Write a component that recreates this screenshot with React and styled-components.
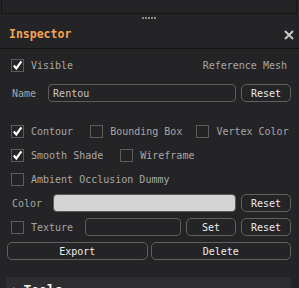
import React from 'react';
import styled, { createGlobalStyle } from 'styled-components';

const Global = createGlobalStyle`
	html, body{
		margin: 0;
		background: #242426;
		overflow: hidden;
	}
	body{
		font-family: 'DejaVu Sans Mono', 'Liberation Mono', monospace;
		font-size: 10px;
		color: #a6a6a6;
	}
`;

const Panel = styled.div`
	width: 299px;
	display: flex;
	flex-direction: column;

	& > *{
		flex: none;
	}
`;

const TopStrip = styled.div`
	height: 13px;
	margin: 0 2px 0 1px;
	border: 1px solid #161617;
	border-top: none;
`;

const Handle = styled.div`
	height: 8px;
	display: flex;
	align-items: center;
	justify-content: center;

	span{
		width: 15px;
		height: 2px;
		background: repeating-linear-gradient(90deg, #8a8a8a 0 2px, transparent 2px 3px);
	}
`;

const Header = styled.div`
	height: 26px;
	display: flex;
	align-items: center;
	justify-content: space-between;
	padding: 0 5px 0 9px;
	border-bottom: 1px solid #161617;

	.title{
		color: #f5a550;
		font-weight: 700;
		font-size: 11.5px;
		margin-top: -2px;
	}
`;

const Body = styled.div`
	padding: 4px 8px 0 7px;
	display: flex;
	flex-direction: column;
`;

const Row = styled.div`
	height: 24px;
	margin-top: ${p => p.$mt || 0}px;
	display: flex;
	align-items: center;
`;

const Box = styled.div`
	width: 11px;
	height: 11px;
	border: 1px solid #5c5c5c;
	flex: none;
	margin-left: ${p => p.$ml ?? 0}px;
	display: flex;
	align-items: center;
	justify-content: center;
`;

const Label = styled.span`
	margin-left: ${p => p.$ml ?? 0}px;
	margin-right: ${p => p.$mr ?? 0}px;
	white-space: nowrap;
`;

const Field = styled.div`
	flex: ${p => p.$w ? 'none' : 1};
	width: ${p => p.$w ? p.$w + 'px' : 'auto'};
	height: 18px;
	box-sizing: border-box;
	border: 1px solid #5c5c5c;
	border-radius: 4px;
	background: ${p => p.$fill || 'transparent'};
	color: #c4c4c4;
	display: flex;
	align-items: center;
	padding-left: 4px;
	margin-left: ${p => p.$ml ?? 0}px;
`;

const Button = styled.div`
	width: ${p => p.$w ? p.$w + 'px' : 'auto'};
	flex: ${p => p.$w ? 'none' : 1};
	height: 18px;
	box-sizing: border-box;
	border: 1px solid #606060;
	border-radius: 5px;
	color: #ececec;
	display: flex;
	align-items: center;
	justify-content: center;
	margin-left: ${p => p.$ml ?? 0}px;
`;

const Spacer = styled.div`
	flex: 1;
`;

const Bottom = styled.div`
	margin: 14px 8px 0 6px;
	height: 24px;
	background: #2e2e31;
	display: flex;
	align-items: center;
	padding-left: 7px;
	gap: 5px;
	color: #f0f0f0;
	font-weight: 700;
	font-size: 13px;

	.tri{
		color: #8c8c8c;
		font-size: 9px;
	}
`;

function Check({ on, ml = 4 }){
	return (
		<Box $ml={ml}>
			{on && (
				<svg width='11' height='11' viewBox='0 0 11 11'>
					<path d='M1.8 5.6 L4.3 8.4 L9.4 1.4' stroke='#ffffff' strokeWidth='2.2' fill='none' />
				</svg>
			)}
		</Box>
	);
}

export default function App(){
	return (
		<Panel>
			<Global />
			<TopStrip />
			<Handle><span /></Handle>
			<Header>
				<span className='title'>Inspector</span>
				<svg width='10' height='10' viewBox='0 0 10 10'>
					<path d='M1 1 L9 9 M9 1 L1 9' stroke='#c8c8c8' strokeWidth='2' />
				</svg>
			</Header>
			<Body>
				<Row>
					<Check on />
					<Label $ml={7}>Visible</Label>
					<Spacer />
					<Label $mr={4}>Reference Mesh</Label>
				</Row>
				<Row $mt={4}>
					<Label $ml={5}>Name</Label>
					<Field $ml={12}>Rentou</Field>
					<Button $w={50} $ml={5}>Reset</Button>
				</Row>
				<Row $mt={14}>
					<Check on />
					<Label $ml={7}>Contour</Label>
					<Check ml={17} />
					<Label $ml={7}>Bounding Box</Label>
					<Check ml={14} />
					<Label $ml={7}>Vertex Color</Label>
				</Row>
				<Row>
					<Check on />
					<Label $ml={7}>Smooth Shade</Label>
					<Check ml={17} />
					<Label $ml={7}>Wireframe</Label>
				</Row>
				<Row>
					<Check />
					<Label $ml={7}>Ambient Occlusion Dummy</Label>
				</Row>
				<Row>
					<Label $ml={5}>Color</Label>
					<Field $ml={11} $fill='#d4d4d4' />
					<Button $w={50} $ml={5}>Reset</Button>
				</Row>
				<Row>
					<Check />
					<Label $ml={7}>Texture</Label>
					<Field $ml={12} />
					<Button $w={50} $ml={5}>Set</Button>
					<Button $w={50} $ml={5}>Reset</Button>
				</Row>
				<Row>
					<Button>Export</Button>
					<Button $ml={3}>Delete</Button>
				</Row>
			</Body>
			<Bottom>
				<span className='tri'>▶</span>
				<span>Tools</span>
			</Bottom>
		</Panel>
	);
}
